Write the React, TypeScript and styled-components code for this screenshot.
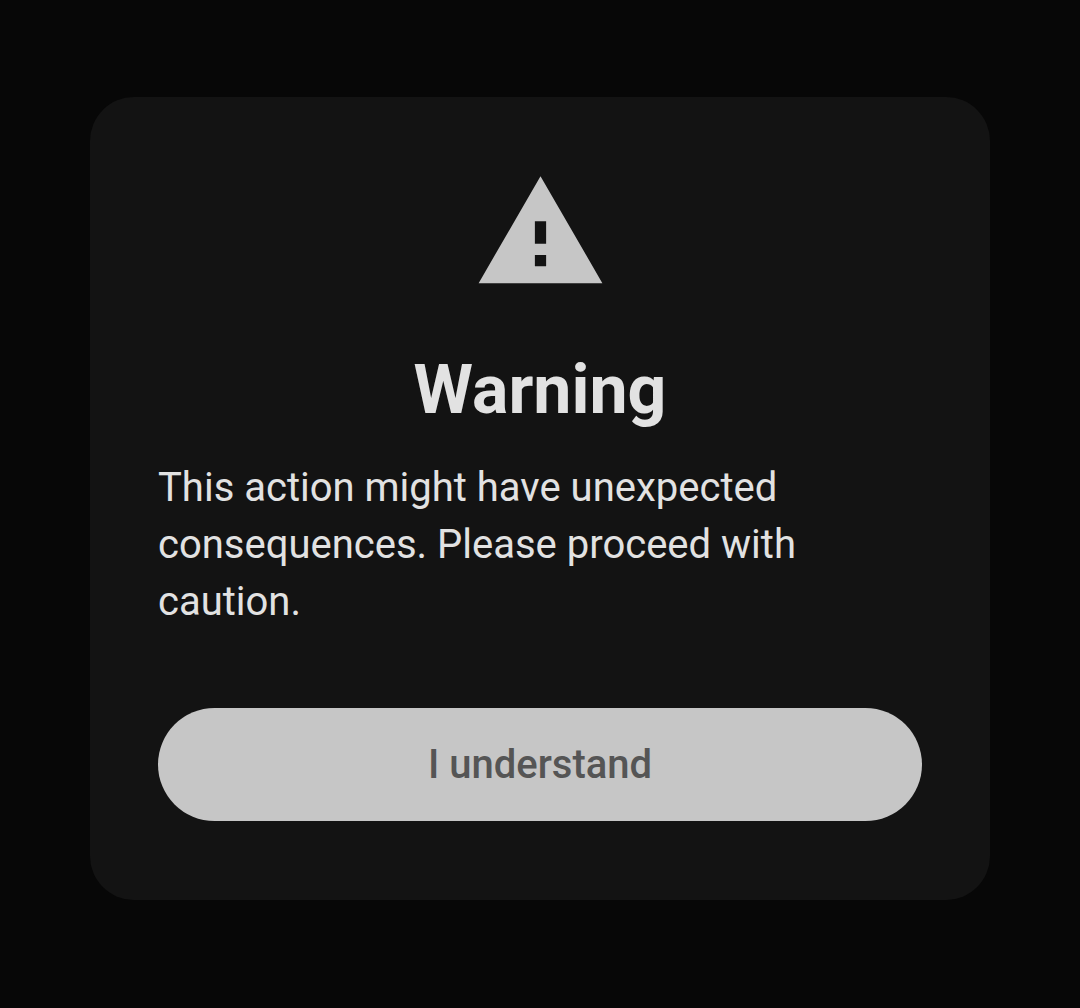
import React from "react";
import styled, { createGlobalStyle } from "styled-components";

const GlobalStyle = createGlobalStyle`
  *, *::before, *::after { box-sizing: border-box; }
  body {
    margin: 0;
    background: #070707;
    font-family: Roboto, "Liberation Sans", sans-serif;
  }
`;

const Backdrop = styled.main`
  display: flex;
  justify-content: center;
  align-items: flex-start;
  min-height: 100vh;
  padding: 97px 90px 108px;
  background: #070707;
`;

const Dialog = styled.section`
  display: flex;
  flex-direction: column;
  align-items: center;
  width: 100%;
  max-width: 900px;
  padding: 68px 68px 79px;
  border-radius: 44px;
  background: #131313;
  color: #e2e2e2;
`;

const WarningIcon = styled.svg`
  width: 135px;
  height: 135px;
  fill: #c6c6c6;
`;

const Title = styled.h1`
  margin: 45px 0 0;
  font-size: 68px;
  line-height: 90px;
  font-weight: 700;
`;

const Message = styled.p`
  align-self: stretch;
  margin: 24px 0 0;
  font-size: 40px;
  line-height: 57px;
`;

const ConfirmButton = styled.button`
  align-self: stretch;
  margin: 78px 0 0;
  padding: 28px 24px;
  border: 0;
  border-radius: 57px;
  background: #c6c6c6;
  color: #555555;
  font: 500 40px/57px Roboto, "Liberation Sans", sans-serif;
  cursor: pointer;
`;

export default function App() {
  return (
    <>
      <GlobalStyle />
      <Backdrop>
        <Dialog role="alertdialog" aria-labelledby="title" aria-describedby="message">
          <WarningIcon viewBox="0 0 24 24" aria-hidden="true">
            <path d="M1 21h22L12 2 1 21zm12-3h-2v-2h2v2zm0-4h-2v-4h2v4z" />
          </WarningIcon>
          <Title id="title">Warning</Title>
          <Message id="message">
            This action might have unexpected consequences. Please proceed with caution.
          </Message>
          <ConfirmButton type="button">I understand</ConfirmButton>
        </Dialog>
      </Backdrop>
    </>
  );
}
